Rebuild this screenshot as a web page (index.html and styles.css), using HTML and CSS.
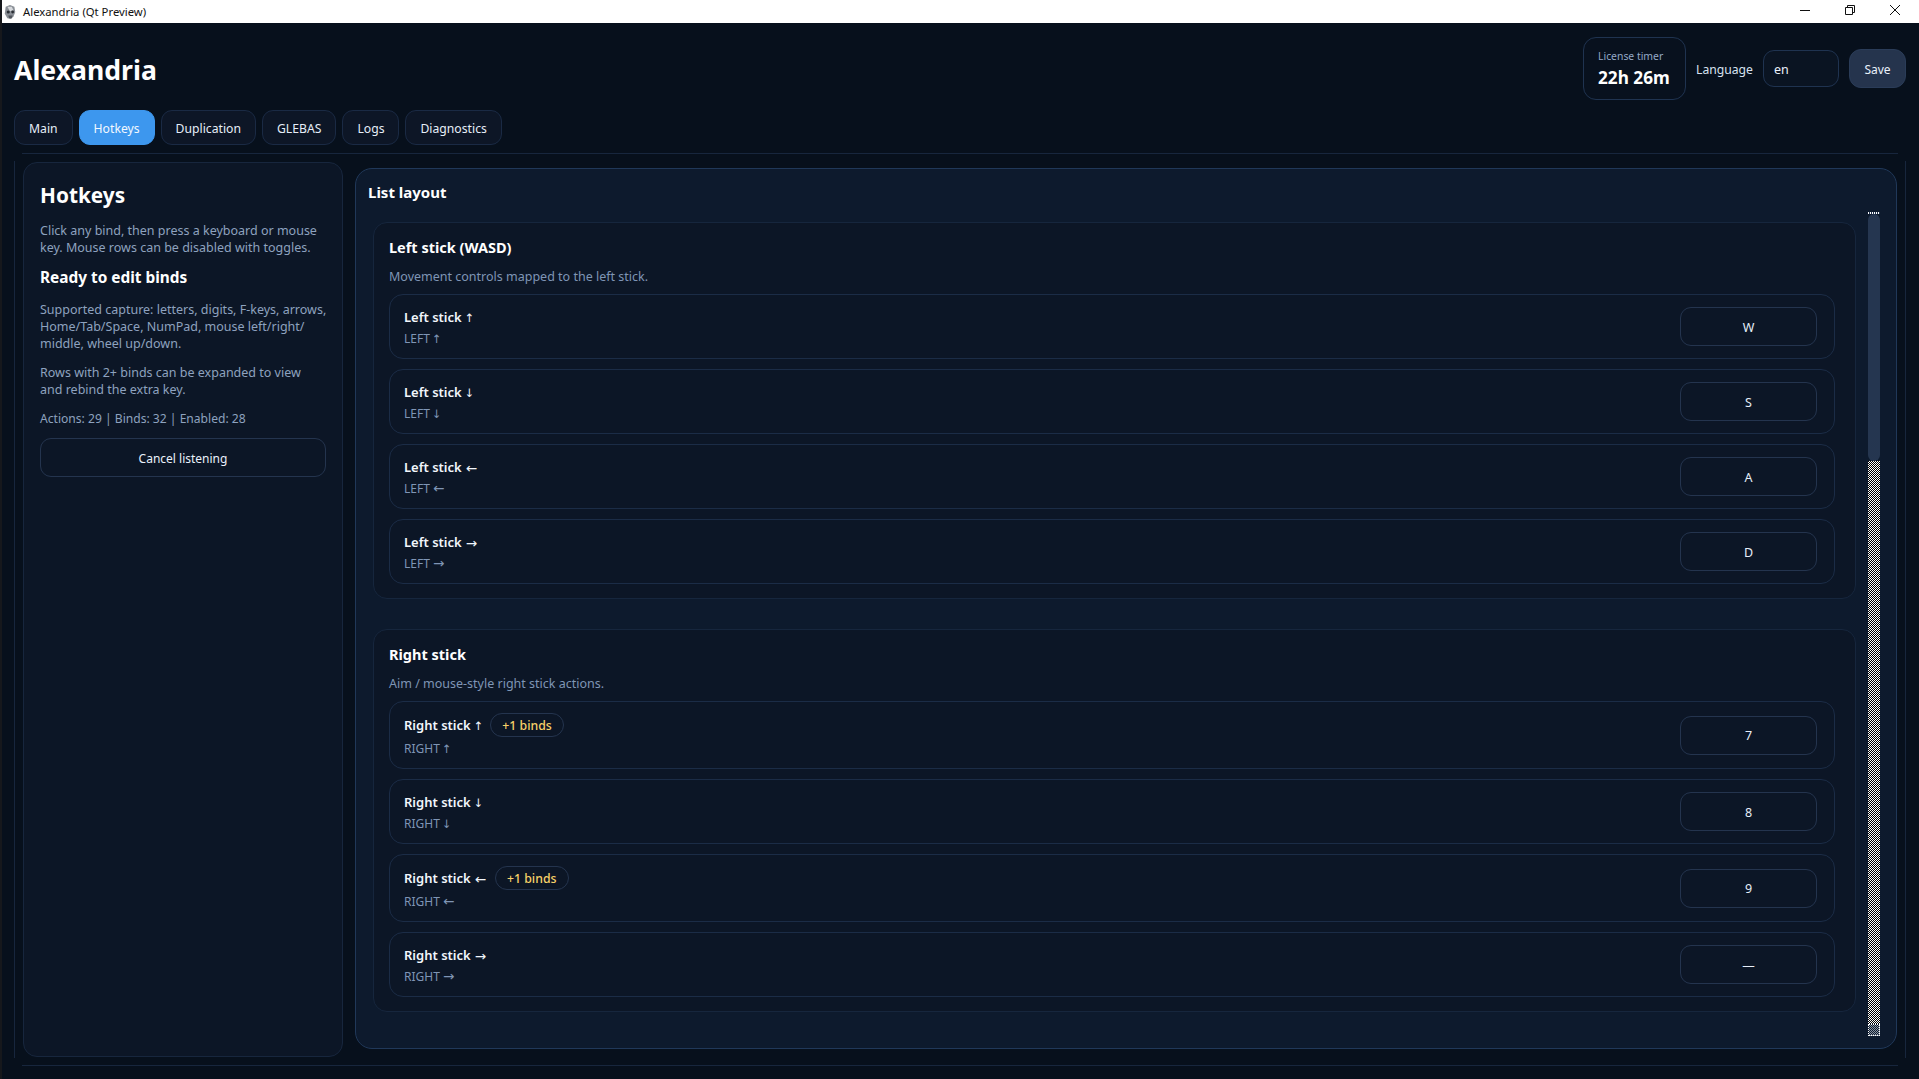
FILE: index.html
```html
<!DOCTYPE html>
<html lang="en">
<head>
<meta charset="utf-8">
<title>Alexandria (Qt Preview)</title>
<link rel="stylesheet" href="styles.css">
</head>
<body>
<div class="edge-handle"></div>
<div class="titlebar">
  <svg class="appicon" width="14" height="16" viewBox="0 0 16 18"><path d="M3 3 L8 1 L13 3 L14 9 L12 14 L9 17 L5 16 L2 11 Z" fill="#8a8f96"/><path d="M5 3 L10 3 L12 7 L8 8 Z" fill="#d5d8dc"/><circle cx="6" cy="9" r="1.8" fill="#2a2e34"/><circle cx="11" cy="9" r="1.6" fill="#2a2e34"/><path d="M6 13 L11 13 L10 16 L7 16 Z" fill="#50555c"/></svg>
  <span class="wintitle">Alexandria (Qt Preview)</span>
  <div class="winbtns">
    <svg width="10" height="10" viewBox="0 0 10 10"><path d="M0 5.5H10" stroke="#111" fill="none"/></svg>
    <svg width="10" height="10" viewBox="0 0 10 10"><path d="M.5 2.5H7.5V9.5H.5ZM2.5 2.5V.5H9.5V7.5H7.5" stroke="#111" fill="none"/></svg>
    <svg width="10" height="10" viewBox="0 0 10 10"><path d="M0 0L10 10M10 0L0 10" stroke="#111" fill="none"/></svg>
  </div>
</div>
<div class="app">
  <header class="top">
    <h1 class="brand">Alexandria</h1>
    <div class="top-right">
      <div class="timer"><div class="timer-label">License timer</div><div class="timer-value">22h 26m</div></div>
      <span class="lang-label">Language</span>
      <div class="lang-input">en</div>
      <div class="save">Save</div>
    </div>
  </header>
  <nav class="tabs">
    <div class="tab">Main</div>
    <div class="tab active">Hotkeys</div>
    <div class="tab">Duplication</div>
    <div class="tab">GLEBAS</div>
    <div class="tab">Logs</div>
    <div class="tab">Diagnostics</div>
  </nav>
  <div class="pane">
    <aside class="side">
      <h2 class="side-title">Hotkeys</h2>
      <p class="txt">Click any bind, then press a keyboard or mouse<br>key. Mouse rows can be disabled with toggles.</p>
      <h3 class="side-sub">Ready to edit binds</h3>
      <p class="txt">Supported capture: letters, digits, F-keys, arrows,<br>Home/Tab/Space, NumPad, mouse left/right/<br>middle, wheel up/down.</p>
      <p class="txt">Rows with 2+ binds can be expanded to view<br>and rebind the extra key.</p>
      <p class="txt stats">Actions: 29 | Binds: 32 | Enabled: 28</p>
      <div class="cancel">Cancel listening</div>
    </aside>
    <main class="list">
      <div class="list-title">List layout</div>
      <div class="list-body">
        <div class="sections">
          <section class="section">
            <div class="sec-title">Left stick (WASD)</div>
            <div class="sec-sub">Movement controls mapped to the left stick.</div>
            <div class="rows">
              <div class="row"><div class="info"><div class="name">Left stick <span class="arr v">↑</span></div><div class="code">LEFT <span class="arr v">↑</span></div></div><div class="bind">W</div></div>
              <div class="row"><div class="info"><div class="name">Left stick <span class="arr v">↓</span></div><div class="code">LEFT <span class="arr v">↓</span></div></div><div class="bind">S</div></div>
              <div class="row"><div class="info"><div class="name">Left stick <span class="arr">←</span></div><div class="code">LEFT <span class="arr">←</span></div></div><div class="bind">A</div></div>
              <div class="row"><div class="info"><div class="name">Left stick <span class="arr">→</span></div><div class="code">LEFT <span class="arr">→</span></div></div><div class="bind">D</div></div>
            </div>
          </section>
          <section class="section">
            <div class="sec-title">Right stick</div>
            <div class="sec-sub">Aim / mouse-style right stick actions.</div>
            <div class="rows">
              <div class="row"><div class="info"><div class="name">Right stick <span class="arr v">↑</span><span class="chip">+1 binds</span></div><div class="code">RIGHT <span class="arr v">↑</span></div></div><div class="bind">7</div></div>
              <div class="row"><div class="info"><div class="name">Right stick <span class="arr v">↓</span></div><div class="code">RIGHT <span class="arr v">↓</span></div></div><div class="bind">8</div></div>
              <div class="row"><div class="info"><div class="name">Right stick <span class="arr">←</span><span class="chip">+1 binds</span></div><div class="code">RIGHT <span class="arr">←</span></div></div><div class="bind">9</div></div>
              <div class="row"><div class="info"><div class="name">Right stick <span class="arr">→</span></div><div class="code">RIGHT <span class="arr">→</span></div></div><div class="bind">—</div></div>
            </div>
          </section>
        </div>
        <div class="scrollbar">
          <div class="sb-cap"></div>
          <div class="sb-thumb"></div>
          <div class="sb-track"></div>
          <div class="sb-arrow"></div>
        </div>
      </div>
    </main>
  </div>
</div>
</body>
</html>
```
FILE: styles.css
```css
* { box-sizing: border-box; }
html, body { margin: 0; padding: 0; height: 100%; overflow: hidden; }
body {
  width: 1919px; height: 1079px;
  background: #07101c;
  font-family: "Noto Sans", sans-serif;
  color: #eaf1fb;
  font-size: 13px;
  border-left: 2px solid #16181c;
  display: flex; flex-direction: column;
  position: relative;
}
.edge-handle { position: absolute; left: -2px; top: 741px; width: 2px; height: 46px; background: #4a4d52; }
.titlebar {
  height: 23px; background: #fff; color: #111; flex: none;
  display: flex; align-items: center; padding-left: 1px;
  font-size: 11.3px;
}
.appicon { flex: none; margin-right: 6px; }
.wintitle { flex: 1; white-space: nowrap; }
.winbtns { display: flex; align-items: center; gap: 35px; padding: 0 19px 3px 0; }
.winbtns svg { display: block; }

.app { flex: 1; display: flex; flex-direction: column; padding: 14px 13px 13px 12px; min-height: 0; }
.top { display: flex; justify-content: space-between; align-items: center; height: 63px; flex: none; }
.brand { margin: 2px 0 0; font-size: 26.6px; font-weight: 700; color: #fff; line-height: 40px; }
.top-right { display: flex; align-items: center; gap: 10px; }
.timer { width: 103px; height: 63px; border: 1px solid #1f3350; border-radius: 13px; padding: 11px 14px; background: #08111e; white-space: nowrap; }
.timer-label { font-size: 10.4px; line-height: 14px; color: #94a9c7; }
.timer-value { margin-top: 3px; font-size: 17.2px; line-height: 24px; font-weight: 700; color: #fff; }
.lang-label { color: #d8e2f0; font-size: 12.2px; padding-top: 2px; }
.lang-input { width: 76px; height: 37px; border: 1px solid #1f3350; border-radius: 11px; background: #0a1422; display: flex; align-items: center; padding: 2px 0 0 10px; font-size: 12.5px; color: #eaf1fb; }
.save { width: 57px; height: 39px; background: #25344d; border: 1px solid #2a3c58; border-radius: 12px; display: flex; align-items: center; justify-content: center; padding-top: 1px; font-size: 12px; color: #eaf1fb; }

.tabs { display: flex; gap: 6px; margin-top: 10px; height: 35px; flex: none; }
.tab { padding: 1px 14px 0; height: 35px; border: 1px solid #1a2a44; border-radius: 11px; background: #0d1626; display: flex; align-items: center; font-size: 12.2px; color: #e6eef9; }
.tab.active { background: #3d97ee; border-color: #3d97ee; color: #f2f8ff; }

.pane {
  flex: 1; margin-top: 8px; min-height: 0;
  display: flex; align-items: flex-start; gap: 12px;
  padding: 9px;
  background:
    linear-gradient(#17263d, #17263d) 8px 0 / calc(100% - 16px) 1px no-repeat,
    linear-gradient(#17263d, #17263d) 8px 100% / calc(100% - 16px) 1px no-repeat,
    linear-gradient(#17263d, #17263d) 0 8px / 1px calc(100% - 16px) no-repeat,
    linear-gradient(#17263d, #17263d) 100% 8px / 1px calc(100% - 16px) no-repeat;
}
.side {
  width: 320px; height: 895px; flex: none;
  background: #0c1626; border: 1px solid #17263d; border-radius: 14px;
  padding: 15px 16px;
}
.side-title { margin: 0 0 10px; font-size: 20.8px; line-height: 34px; font-weight: 700; color: #fff; }
.txt { margin: 12px 0 0; font-size: 12.5px; line-height: 17px; color: #8ea2bf; white-space: nowrap; }
.txt.stats { font-size: 12.1px; }
.side-title + .txt { margin-top: 0; }
.side-sub { margin: 11px 0 0; font-size: 15.4px; line-height: 22px; font-weight: 700; color: #fff; }
.cancel { margin-top: 11px; height: 39px; padding-top: 1px; border: 1px solid #24344e; border-radius: 11px; display: flex; align-items: center; justify-content: center; font-size: 12px; color: #eaf1fb; }

.list {
  flex: 1; height: 881px; margin-top: 6px;
  background: #0d1a2d; border: 1px solid #203859; border-radius: 17px;
  padding: 12px 16px 12px 12px;
  display: flex; flex-direction: column;
}
.list-title { font-size: 15px; line-height: 22px; font-weight: 700; color: #fff; }
.list-body { flex: 1; display: flex; gap: 12px; margin-top: 8px; min-height: 0; margin-left: 5px; }
.sections { flex: 1; display: flex; flex-direction: column; gap: 30px; margin-top: 11px; }
.section { background: #0c1626; border: 1px solid #16263d; border-radius: 14px; padding: 14px 20px 14px 15px; }
.sec-title { font-size: 14.5px; line-height: 20px; font-weight: 700; color: #fff; }
.sec-sub { margin-top: 11px; font-size: 12.5px; line-height: 18px; color: #7f95b5; }
.rows { display: flex; flex-direction: column; gap: 10px; margin-top: 8px; }
.row { display: flex; align-items: center; justify-content: space-between; border: 1px solid #1b2c46; border-radius: 14px; padding: 9.5px 17px 9.5px 14px; }
.name { font-size: 13px; line-height: 24px; font-weight: 600; color: #f2f6fc; display: flex; align-items: center; gap: 4px; }
.code { font-size: 12px; height: 20px; line-height: 20px; color: #7f95b5; }
.arr { font-family: "DejaVu Sans", sans-serif; font-size: 13.5px; line-height: 1; font-weight: 400; }
.arr.v { font-size: 11.5px; margin: 0 -2px 0 -1px; }
.name .arr { padding-top: 4px; }
.code .arr.v { margin-left: -1px; }
.chip { margin: 1.5px 0 1.5px 5px; height: 24px; padding: 1px 11px 0; border: 1px solid #24344e; border-radius: 12px; font-family: "Noto Sans", sans-serif; font-size: 12.3px; line-height: 20px; font-weight: 500; color: #f8d169; display: flex; align-items: center; }
.bind { width: 137px; height: 39px; padding-top: 1px; border: 1px solid #24344e; border-radius: 11px; display: flex; align-items: center; justify-content: center; font-size: 12.5px; color: #e6eef9; }

.scrollbar { width: 12px; flex: none; display: flex; flex-direction: column; margin-top: 1px; height: 824px; }
.sb-cap { height: 2px; background: repeating-linear-gradient(90deg, #fff 0 1px, #253650 1px 2px); flex: none; }
.sb-thumb { height: 247px; background: #253650; border-radius: 6px; flex: none; }
.sb-track { flex: 1; background: repeating-conic-gradient(#fff 0 25%, #000 0 50%) 0 0 / 2px 2px; }
.sb-arrow { height: 12px; flex: none; border: 1px dotted #fff; background: repeating-conic-gradient(#8c96a3 0 25%, #0d1a2d 0 50%) 0 0 / 2px 2px; }
```
